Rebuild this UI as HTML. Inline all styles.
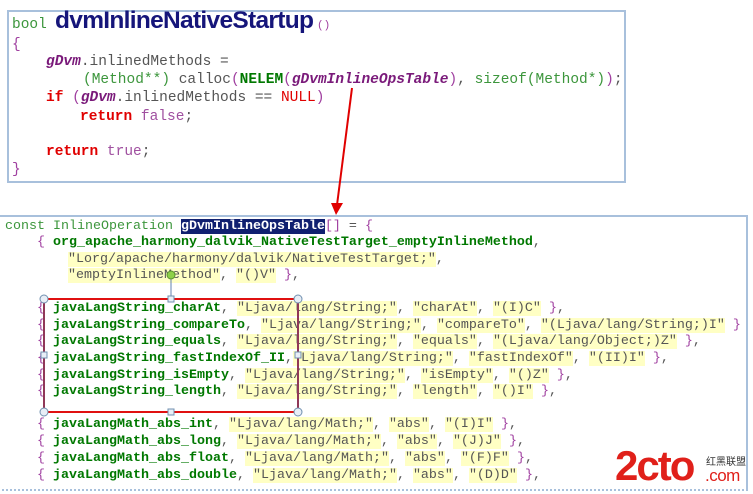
<!DOCTYPE html>
<html><head><meta charset="utf-8"><style>
html,body{margin:0;padding:0;background:#fff;width:753px;height:494px;overflow:hidden;position:relative}
.box{position:absolute;border:2px solid #a8c0dc;background:#fff}
.l{position:absolute;white-space:pre;font-family:"Liberation Mono",monospace;font-size:13.33px;line-height:16px;color:#555}
.t{font-size:14.5px;line-height:18px}
.p{color:#a040a0}
.g{color:#3c963c}
.b{color:#007800;font-weight:bold}
.s{background:#ffffc4;color:#555}
.v{color:#7a1a7a;font-weight:bold;font-style:italic}
.r{color:#e00000;font-weight:bold}
.n{color:#e00000}
.k{color:#a050a0}
.sel{background:#102070;color:#fff;font-weight:bold}
</style></head><body>
<div class="box" style="left:7px;top:10px;width:615px;height:169px"></div>
<div class="box" style="left:-2px;top:215px;width:746px;height:272px;border-bottom-style:dotted"></div>

<div class="l t" style="left:12px;top:16px"><span class="g">bool</span></div>
<div style="position:absolute;left:55px;top:7px;font-family:'Liberation Sans',sans-serif;font-weight:bold;font-size:24.5px;color:#15157a;letter-spacing:-0.7px">dvmInlineNativeStartup</div>
<div class="l" style="left:317px;top:18px"><span class="p" style="font-size:11px">()</span></div>
<div class="l t" style="left:12px;top:36px"><span class="p">{</span></div>
<div class="l t" style="left:46px;top:53px"><span class="v">gDvm</span>.inlinedMethods =</div>
<div class="l t" style="left:83px;top:71px"><span class="g">(Method**)</span> calloc<span class="p">(</span><span class="b">NELEM</span><span class="p">(</span><span class="v">gDvmInlineOpsTable</span><span class="p">)</span>, <span class="g">sizeof(Method*)</span><span class="p">)</span>;</div>
<div class="l t" style="left:46px;top:89px"><span class="r">if</span> <span class="p">(</span><span class="v">gDvm</span>.inlinedMethods == <span class="n">NULL</span><span class="p">)</span></div>
<div class="l t" style="left:80px;top:108px"><span class="r">return</span> <span class="k">false</span>;</div>
<div class="l t" style="left:46px;top:143px"><span class="r">return</span> <span class="k">true</span>;</div>
<div class="l t" style="left:12px;top:161px"><span class="p">}</span></div>

<div class="l" style="left:5px;top:219px"><span class="g">const InlineOperation </span><span class="sel">gDvmInlineOpsTable</span><span class="p">[]</span> = <span class="p">{</span></div>
<div class="l" style="left:37px;top:235px"><span class="p">{</span> <span class="b">org_apache_harmony_dalvik_NativeTestTarget_emptyInlineMethod</span>,</div>
<div class="l" style="left:68px;top:252px"><span class="s">"Lorg/apache/harmony/dalvik/NativeTestTarget;"</span>,</div>
<div class="l" style="left:68px;top:268px"><span class="s">"emptyInlineMethod"</span>, <span class="s">"()V"</span> <span class="p">}</span>,</div>
<div class="l" style="left:37px;top:301px"><span class="p">{</span> <span class="b">javaLangString_charAt</span>, <span class="s">"Ljava/lang/String;"</span>, <span class="s">"charAt"</span>, <span class="s">"(I)C"</span> <span class="p">}</span>,</div>
<div class="l" style="left:37px;top:318px"><span class="p">{</span> <span class="b">javaLangString_compareTo</span>, <span class="s">"Ljava/lang/String;"</span>, <span class="s">"compareTo"</span>, <span class="s">"(Ljava/lang/String;)I"</span> <span class="p">}</span></div>
<div class="l" style="left:37px;top:334px"><span class="p">{</span> <span class="b">javaLangString_equals</span>, <span class="s">"Ljava/lang/String;"</span>, <span class="s">"equals"</span>, <span class="s">"(Ljava/lang/Object;)Z"</span> <span class="p">}</span>,</div>
<div class="l" style="left:37px;top:351px"><span class="p">{</span> <span class="b">javaLangString_fastIndexOf_II</span>,<span class="s">"Ljava/lang/String;"</span>, <span class="s">"fastIndexOf"</span>, <span class="s">"(II)I"</span> <span class="p">}</span>,</div>
<div class="l" style="left:37px;top:368px"><span class="p">{</span> <span class="b">javaLangString_isEmpty</span>, <span class="s">"Ljava/lang/String;"</span>, <span class="s">"isEmpty"</span>, <span class="s">"()Z"</span> <span class="p">}</span>,</div>
<div class="l" style="left:37px;top:384px"><span class="p">{</span> <span class="b">javaLangString_length</span>, <span class="s">"Ljava/lang/String;"</span>, <span class="s">"length"</span>, <span class="s">"()I"</span> <span class="p">}</span>,</div>
<div class="l" style="left:37px;top:417px"><span class="p">{</span> <span class="b">javaLangMath_abs_int</span>, <span class="s">"Ljava/lang/Math;"</span>, <span class="s">"abs"</span>, <span class="s">"(I)I"</span> <span class="p">}</span>,</div>
<div class="l" style="left:37px;top:434px"><span class="p">{</span> <span class="b">javaLangMath_abs_long</span>, <span class="s">"Ljava/lang/Math;"</span>, <span class="s">"abs"</span>, <span class="s">"(J)J"</span> <span class="p">}</span>,</div>
<div class="l" style="left:37px;top:451px"><span class="p">{</span> <span class="b">javaLangMath_abs_float</span>, <span class="s">"Ljava/lang/Math;"</span>, <span class="s">"abs"</span>, <span class="s">"(F)F"</span> <span class="p">}</span>,</div>
<div class="l" style="left:37px;top:468px"><span class="p">{</span> <span class="b">javaLangMath_abs_double</span>, <span class="s">"Ljava/lang/Math;"</span>, <span class="s">"abs"</span>, <span class="s">"(D)D"</span> <span class="p">}</span>,</div>

<svg style="position:absolute;left:0;top:0" width="753" height="494">
<line x1="352" y1="88" x2="337" y2="205" stroke="#e00000" stroke-width="2"/>
<polygon points="331,203 343,203 336,215" fill="#e00000"/>
<rect x="44" y="299" width="254" height="113" fill="none" stroke="#e01010" stroke-width="2"/>
<line x1="44" y1="299" x2="44" y2="412" stroke="#4060a0" stroke-width="1"/>
<line x1="298" y1="299" x2="298" y2="412" stroke="#4060a0" stroke-width="1"/>
<line x1="171" y1="276" x2="171" y2="299" stroke="#6080b0" stroke-width="1"/>
<circle cx="171" cy="275" r="4" fill="#8ed048" stroke="#5a9030"/>
<g fill="#e8eef6" stroke="#7090b0">
<circle cx="44" cy="299" r="4"/><circle cx="298" cy="299" r="4"/>
<circle cx="44" cy="412" r="4"/><circle cx="298" cy="412" r="4"/>
<rect x="168" y="296" width="6" height="6"/><rect x="168" y="409" width="6" height="6"/>
<rect x="41" y="352" width="6" height="6"/><rect x="295" y="352" width="6" height="6"/>
</g>
</svg>
<div style="position:absolute;left:615px;top:444px;font-family:'Liberation Sans',sans-serif;font-weight:bold;font-size:42px;color:#e0201a;letter-spacing:-2px;line-height:44px">2cto</div>
<div style="position:absolute;left:705px;top:467px;font-family:'Liberation Sans',sans-serif;font-size:17px;color:#e0201a;letter-spacing:-0.5px;line-height:18px">.com</div>
<div style="position:absolute;left:706px;top:456px;font-family:'Noto Sans CJK SC',sans-serif;font-size:10px;color:#333;line-height:10px">红黑联盟</div>
</body></html>
